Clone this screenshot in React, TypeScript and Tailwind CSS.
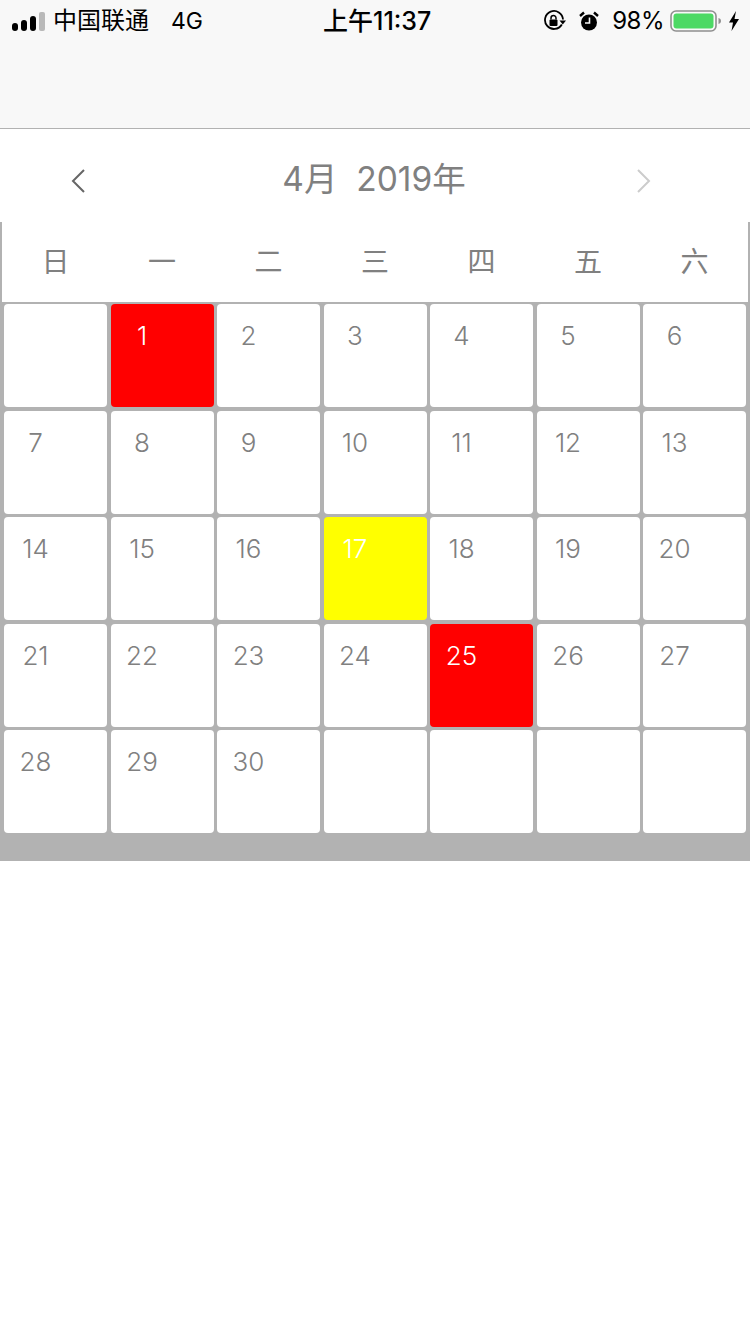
import React from "react";

const CJK = '"Inter","Noto Sans CJK SC",sans-serif';
const weeks = ["日", "一", "二", "三", "四", "五", "六"];
const days: (number | null)[] = [null, ...Array.from({ length: 30 }, (_, i) => i + 1), null, null, null, null];

function Signal() {
  return (
    <div className="flex items-end gap-[3px] h-[19px]">
      <span className="w-[6px] h-[8px] rounded-[3px] bg-black" />
      <span className="w-[6px] h-[11px] rounded-[3px] bg-black" />
      <span className="w-[6px] h-[15px] rounded-[3px] bg-black" />
      <span className="w-[6px] h-[19px] rounded-[2px] bg-[#b9b9b9]" />
    </div>
  );
}

function RotationLock() {
  return (
    <svg width="23" height="22" viewBox="0 0 23 22" fill="none">
      <path d="M18.8 14.5A9 9 0 1 1 20 9.5" stroke="#000" strokeWidth="1.8" fill="none" />
      <path d="M16.5 10.5h6.5l-3.2 4z" fill="#000" />
      <rect x="6.5" y="9.5" width="8" height="6.5" rx="1" fill="#000" />
      <path d="M8 9.5V8a2.5 2.5 0 0 1 5 0v1.5" stroke="#000" strokeWidth="1.5" fill="none" />
    </svg>
  );
}

function Alarm() {
  return (
    <svg width="20" height="22" viewBox="0 0 20 22" fill="none">
      <circle cx="10" cy="12.5" r="8" fill="#000" />
      <path d="M10.5 7.5v5.5H6" stroke="#f8f8f8" strokeWidth="1.6" fill="none" />
      <path d="M1 6 5 2.5M19 6 15 2.5" stroke="#000" strokeWidth="2.4" />
    </svg>
  );
}

function Battery() {
  return (
    <svg width="52" height="24" viewBox="0 0 52 24" fill="none">
      <rect x="1" y="2" width="45" height="20" rx="5" stroke="#8f8f8f" strokeWidth="1.6" fill="none" />
      <rect x="3.5" y="4.5" width="40" height="15" rx="3" fill="#4cd964" />
      <path d="M48.5 9c1.6.4 2.5 1.4 2.5 3s-.9 2.6-2.5 3z" fill="#8f8f8f" />
    </svg>
  );
}

function Bolt() {
  return (
    <svg width="12" height="22" viewBox="0 0 12 22">
      <path d="M8 1 1 12.5h4L3.5 21 11 9H6.5z" fill="#000" />
    </svg>
  );
}

function Chevron({ dir, color }: { dir: "left" | "right"; color: string }) {
  return (
    <svg className="mt-[4px]" width="16" height="26" viewBox="0 0 16 26" fill="none">
      <path d={dir === "left" ? "M14 2 3 13l11 11" : "M2 2l11 11L2 24"} stroke={color} strokeWidth="2" />
    </svg>
  );
}

export default function App() {
  return (
    <div className="w-[750px] h-[1334px] bg-white overflow-hidden" style={{ fontFamily: CJK }}>
      <div className="h-[129px] bg-[#f8f8f8] border-b border-[#b2b2b2]">
        <div className="relative h-[42px] flex items-center justify-between pl-[12px] pr-[10px] text-black">
          <div className="flex items-center">
            <Signal />
            <span className="ml-[8px] text-[24px] leading-[40px] font-normal">中国联通</span>
            <span className="ml-[22px] text-[23px] leading-[40px]">4G</span>
          </div>
          <span className="absolute left-[323px] top-px text-[25px] leading-[40px] font-medium">上午11:37</span>
          <div className="flex items-center">
            <RotationLock />
            <span className="w-[13px]" />
            <Alarm />
            <span className="ml-[13px] text-[24px] leading-[40px] tracking-[-0.5px]">98%</span>
            <span className="w-[6px]" />
            <Battery />
            <span className="w-[6px]" />
            <Bolt />
          </div>
        </div>
      </div>

      <div className="h-[93px] flex items-center pl-[70px] pr-[98px] pt-[6px]">
        <Chevron dir="left" color="#666666" />
        <span className="flex-1 pl-[26px] text-center text-[33.5px] text-[#808080] leading-[40px] whitespace-pre">4月  2019年</span>
        <Chevron dir="right" color="#cccccc" />
      </div>

      <div className="h-[80px] grid grid-cols-7 gap-x-[3.5px] px-[2px] items-center border-x-2 border-[#b2b2b2]">
        {weeks.map((w) => (
          <div key={w} className="text-center text-[28px] text-[#808080] font-normal leading-[36px]">
            {w}
          </div>
        ))}
      </div>

      <div className="bg-[#b2b2b2] pt-[2px] pb-[28px] px-1 grid grid-cols-7 gap-x-[3.5px] gap-y-[3.5px]">
        {days.map((d, i) => {
          const bg = d === 1 || d === 25 ? "bg-[#ff0000] text-white" : d === 17 ? "bg-[#ffff00] text-white" : "bg-white text-[#808080]";
          return (
            <div key={i} className={`h-[103px] rounded-[4px] ${bg}`}>
              <div className="w-[63px] text-center text-[26px] font-[350] leading-[32px] pt-[16px] box-content">{d}</div>
            </div>
          );
        })}
      </div>
    </div>
  );
}
